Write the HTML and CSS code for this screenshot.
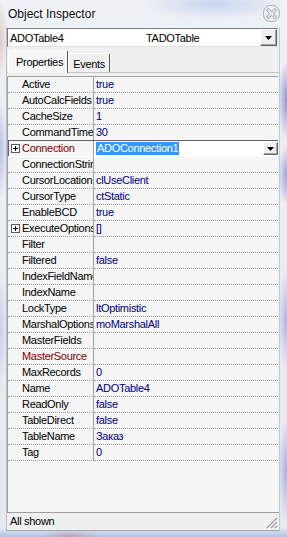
FILE: index.html
```html
<!DOCTYPE html>
<html>
<head>
<meta charset="utf-8">
<title>Object Inspector</title>
<link rel="stylesheet" href="styles.css">
</head>
<body>
<div class="window">
  <div class="titlebar">
    <span class="title">Object Inspector</span>
    <svg class="close" width="19" height="19" viewBox="0 0 19 19">
      <rect x="1.5" y="1.5" width="16" height="16" rx="7" fill="#eef1f5" stroke="#a3acb8"/>
      <path d="M6.3 6.3 L12.7 12.7 M12.7 6.3 L6.3 12.7" stroke="#a3acb8" stroke-width="3.6" stroke-linecap="square"/>
      <path d="M6.3 6.3 L12.7 12.7 M12.7 6.3 L6.3 12.7" stroke="#f4f6f8" stroke-width="1.6" stroke-linecap="square"/>
    </svg>
  </div>
  <div class="client">
    <div class="combo">
      <span class="combo-name">ADOTable4</span>
      <span class="combo-type">TADOTable</span>
      <span class="btn3d combo-btn"><svg width="7" height="4" viewBox="0 0 7 4"><path d="M0 0H7L3.5 4Z" fill="#000"/></svg></span>
    </div>
    <div class="tabs">
      <div class="tab active">Properties</div>
      <div class="tab">Events</div>
    </div>
    <div class="tabgap"></div>
    <div class="grid">
      <div class="row"><div class="name">Active</div><div class="value">true</div></div>
      <div class="row"><div class="name">AutoCalcFields</div><div class="value">true</div></div>
      <div class="row"><div class="name">CacheSize</div><div class="value">1</div></div>
      <div class="row"><div class="name">CommandTimeout</div><div class="value">30</div></div>
      <div class="row sel">
        <div class="name ref has-plus"><svg class="plus" width="9" height="9" viewBox="0 0 9 9"><rect x="0.5" y="0.5" width="8" height="8" fill="#fff" stroke="#5a5a5a"/><path d="M2 4.5H7M4.5 2V7" stroke="#000"/></svg>Connection</div>
        <div class="value edit"><span class="hl">ADOConnection1</span><span class="btn3d edit-btn"><svg width="7" height="4" viewBox="0 0 7 4"><path d="M0 0H7L3.5 4Z" fill="#000"/></svg></span></div>
      </div>
      <div class="row"><div class="name">ConnectionString</div><div class="value"></div></div>
      <div class="row"><div class="name">CursorLocation</div><div class="value">clUseClient</div></div>
      <div class="row"><div class="name">CursorType</div><div class="value">ctStatic</div></div>
      <div class="row"><div class="name">EnableBCD</div><div class="value">true</div></div>
      <div class="row"><div class="name has-plus"><svg class="plus" width="9" height="9" viewBox="0 0 9 9"><rect x="0.5" y="0.5" width="8" height="8" fill="#fff" stroke="#5a5a5a"/><path d="M2 4.5H7M4.5 2V7" stroke="#000"/></svg>ExecuteOptions</div><div class="value">[]</div></div>
      <div class="row"><div class="name">Filter</div><div class="value"></div></div>
      <div class="row"><div class="name">Filtered</div><div class="value">false</div></div>
      <div class="row"><div class="name">IndexFieldName</div><div class="value"></div></div>
      <div class="row"><div class="name">IndexName</div><div class="value"></div></div>
      <div class="row"><div class="name">LockType</div><div class="value">ltOptimistic</div></div>
      <div class="row"><div class="name">MarshalOptions</div><div class="value">moMarshalAll</div></div>
      <div class="row"><div class="name">MasterFields</div><div class="value"></div></div>
      <div class="row"><div class="name ref">MasterSource</div><div class="value"></div></div>
      <div class="row"><div class="name">MaxRecords</div><div class="value">0</div></div>
      <div class="row"><div class="name">Name</div><div class="value">ADOTable4</div></div>
      <div class="row"><div class="name">ReadOnly</div><div class="value">false</div></div>
      <div class="row"><div class="name">TableDirect</div><div class="value">false</div></div>
      <div class="row"><div class="name">TableName</div><div class="value">Заказ</div></div>
      <div class="row"><div class="name">Tag</div><div class="value">0</div></div>
    </div>
    <div class="status">
      <span>All shown</span>
      <svg class="grip" width="12" height="12" viewBox="0 0 12 12">
        <path d="M11 1L1 11M11 5L5 11M11 9L9 11" stroke="#9a9a9a" stroke-width="1.2"/>
        <path d="M12 2L2 12M12 6L6 12M12 10L10 12" stroke="#ffffff" stroke-width="1"/>
      </svg>
    </div>
  </div>
</div>
</body>
</html>
```

FILE: styles.css
```css
* {
  box-sizing: border-box;
}

html,
body {
  margin: 0;
  padding: 0;
}

body {
  width: 287px;
  height: 537px;
  overflow: hidden;
  font-family: "Liberation Sans", Arial, sans-serif;
  font-size: 11px;
  letter-spacing: -0.3px;
  color: #000;
  background: #e6ebf2;
}

.window {
  width: 287px;
  height: 537px;
  display: flex;
  flex-direction: column;
  background:
    radial-gradient(ellipse 70px 16px at 215px 4px, rgba(165, 190, 235, 0.55), transparent),
    radial-gradient(ellipse 8px 40px at 0 40px, rgba(215, 175, 170, 0.6), transparent),
    radial-gradient(ellipse 8px 50px at 0 150px, rgba(150, 165, 220, 0.6), transparent),
    radial-gradient(ellipse 8px 60px at 0 330px, rgba(170, 180, 225, 0.5), transparent),
    radial-gradient(ellipse 9px 40px at 287px 100px, rgba(105, 115, 205, 0.75), transparent),
    radial-gradient(ellipse 9px 30px at 287px 175px, rgba(110, 120, 210, 0.65), transparent),
    radial-gradient(ellipse 9px 50px at 287px 320px, rgba(130, 140, 215, 0.6), transparent),
    radial-gradient(ellipse 9px 50px at 287px 470px, rgba(120, 135, 215, 0.6), transparent),
    radial-gradient(ellipse 30px 8px at 70px 537px, rgba(200, 140, 160, 0.6), transparent),
    linear-gradient(to bottom, transparent 528px, #aec3e6 537px),
    linear-gradient(to bottom, #eef1f5, #e3e9f1);
}

.titlebar {
  height: 27px;
  flex: none;
  display: flex;
  align-items: center;
  padding: 0 6px 0 8px;
}

.title {
  font-size: 12px;
  letter-spacing: 0;
  color: #0a0a0a;
  text-shadow: 0 0 4px #ffffff, 0 0 2px #ffffff;
}

.close {
  margin-left: auto;
  display: block;
}

.client {
  flex: 1;
  margin: 0 7px 6px 6px;
  background: #f0f0f0;
  border-left: 1px solid #b9c1cc;
  border-right: 1px solid #c3cad4;
  border-bottom: 1px solid #9ea6b0;
  display: flex;
  flex-direction: column;
}

.combo {
  flex: none;
  height: 19px;
  margin: 1px 1px 0 0;
  background: #fff;
  border-top: 1px solid #7a7a7a;
  border-left: 1px solid #7a7a7a;
  border-right: 1px solid #e0e0e0;
  border-bottom: 1px solid #e0e0e0;
  display: flex;
  align-items: center;
}

.combo-name {
  width: 138px;
  padding-left: 2px;
}

.btn3d {
  display: flex;
  align-items: center;
  justify-content: center;
  background: #f0f0f0;
  border-top: 1px solid #fff;
  border-left: 1px solid #fff;
  border-right: 1px solid #696969;
  border-bottom: 1px solid #696969;
  box-shadow: inset -1px -1px 0 #a0a0a0;
}

.btn3d svg {
  display: block;
}

.combo-btn {
  margin-left: auto;
  width: 17px;
  height: 17px;
}

.tabs {
  flex: none;
  height: 26px;
  display: flex;
  align-items: flex-end;
  padding-left: 1px;
  border-bottom: 1px solid #c6c6c6;
}

.tab {
  height: 19px;
  display: flex;
  align-items: center;
  padding: 1px 4px 0 4px;
  border-top: 1px solid #fff;
  border-left: 1px solid #fff;
  border-right: 1px solid #5a5a5a;
  border-radius: 2px 2px 0 0;
  background: #f0f0f0;
}

.tab.active {
  height: 23px;
  margin-bottom: -1px;
  padding: 0 4px 0 7px;
  background: #f6f6f6;
}

.tabgap {
  flex: none;
  height: 3px;
}

.grid {
  flex: 1;
  margin-right: 1px;
  background: #f5f5f5;
  border-top: 1px solid #a0a0a0;
  border-left: 1px solid #a0a0a0;
  display: flex;
  flex-direction: column;
}

.row {
  flex: none;
  height: 16px;
  display: flex;
}

.name {
  width: 86px;
  flex: none;
  padding-left: 14px;
  line-height: 15px;
  white-space: nowrap;
  overflow: hidden;
  border-right: 1px solid #a0a0a0;
  border-bottom: 1px dotted #a0a0a0;
}

.name.has-plus {
  padding-left: 3px;
  display: flex;
  align-items: center;
}

.plus {
  flex: none;
  margin-right: 2px;
  display: block;
}

.name.ref {
  color: #800000;
}

.value {
  flex: 1;
  padding-left: 2px;
  line-height: 15px;
  color: #000080;
  white-space: nowrap;
  overflow: hidden;
  border-bottom: 1px dotted #a0a0a0;
}

.row.sel {
  height: 17px;
  margin-top: -1px;
  border-top: 1px solid #646464;
}

.row.sel .name {
  border-bottom: 1px solid #ffffff;
  box-shadow: inset 1px 0 0 #646464;
}

.row.sel .value {
  border-bottom: 1px solid #ffffff;
}

.value.edit {
  background: #fff;
  display: flex;
  align-items: center;
  padding: 0 0 0 2px;
}

.hl {
  background: #3399ff;
  color: #fff;
  line-height: 13px;
  padding: 0 1px;
}

.edit-btn {
  margin-left: auto;
  width: 15px;
  height: 13px;
}

.status {
  flex: none;
  height: 18px;
  border-top: 1px solid #a0a0a0;
  display: flex;
  align-items: center;
  padding: 0 1px 2px 3px;
}

.grip {
  margin-left: auto;
  margin-top: 4px;
  display: block;
}
```
